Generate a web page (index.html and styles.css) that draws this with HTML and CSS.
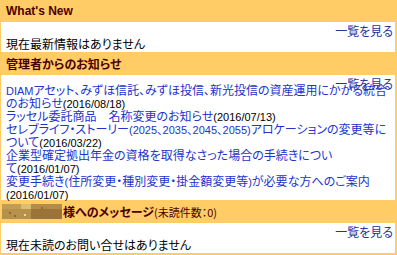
FILE: index.html
```html
<!DOCTYPE html>
<html lang="ja">
<head>
<meta charset="utf-8">
<link rel="stylesheet" href="styles.css">
</head>
<body>
<div class="panel">
  <div class="head head-en">What's New</div>
  <div class="body">
    <div class="more"><a href="#">一覧を見る</a></div>
    <p class="empty">現在最新情報はありません</p>
  </div>

  <div class="head">管理者からのお知らせ</div>
  <div class="body body-news">
    <div class="more"><a href="#">一覧を見る</a></div>
    <ul class="news">
      <li><a href="#"><span class="num">DIAM</span>アセット、みずほ信託、みずほ投信、新光投信の資産運用にかかる統合のお知らせ</a><span class="num date">(2016/08/18)</span></li>
      <li><a href="#">ラッセル委託商品　名称変更のお知らせ</a><span class="num date">(2016/07/13)</span></li>
      <li><a href="#">セレブライフ・ストーリー<span class="num">(2025、2035、2045、2055)</span>アロケーションの変更等について</a><span class="num date">(2016/03/22)</span></li>
      <li><a href="#">企業型確定拠出年金の資格を取得なさった場合の手続きについ<span class="nowrap">て<span class="num date">(2016/01/07)</span></span></a></li>
      <li><a href="#">変更手続き<span class="num">(</span>住所変更・種別変更・掛金額変更等<span class="num">)</span>が必要な方へのご案内</a><span class="num date">(2016/01/07)</span></li>
    </ul>
  </div>

  <div class="head head-msg"><span class="mosaic"></span>様へのメッセージ<span class="count">(未読件数：0)</span></div>
  <div class="body">
    <div class="more"><a href="#">一覧を見る</a></div>
    <p class="empty">現在未読のお問い合せはありません</p>
  </div>
</div>
</body>
</html>
```

FILE: styles.css
```css
html, body {
  margin: 0;
  padding: 0;
  background: #ffffff;
}

body {
  font-family: "Noto Sans CJK JP", "Noto Sans", sans-serif;
  font-size: 12px;
  color: #000000;
  font-feature-settings: "palt";
}

.panel {
  width: 394px;
  border-left: 1px solid #ffcc66;
  border-right: 2px solid #ffcc66;
  border-bottom: 2px solid #ffcc66;
}

.head {
  height: 23px;
  background: #ffcc66;
  padding-left: 5px;
  display: flex;
  align-items: center;
  font-weight: bold;
  font-size: 12px;
  color: #4a0000;
  line-height: 14px;
}

.head-en {
  height: 22px;
  font-family: "Liberation Sans", Arial, sans-serif;
  font-size: 12px;
}

.body {
  height: 30px;
  padding: 2px 2px 0 5px;
  box-sizing: border-box;
}

.body-news {
  height: 125px;
}

.more {
  text-align: right;
  line-height: 13px;
  font-size: 12px;
}

.more a {
  color: #223399;
  text-decoration: none;
}

.empty {
  margin: 0;
  line-height: 14px;
  font-size: 12px;
}

.news {
  list-style: none;
  margin: -7px 0 0 0;
  padding: 0;
  line-height: 13px;
}

.news a {
  color: #2233cc;
  text-decoration: none;
}

.num {
  font-family: "Liberation Sans", "Noto Sans CJK JP", sans-serif;
  font-size: 11px;
  line-height: 0;
}

.date {
  color: #000000;
}

.nowrap {
  white-space: nowrap;
}

.head-msg {
  padding-left: 1px;
}

.mosaic {
  width: 60px;
  height: 15px;
  margin-right: 1px;
  background:
    radial-gradient(circle at 8px 9px, #8a6a30 0 1px, transparent 1.5px),
    radial-gradient(circle at 13px 12px, #8a6a30 0 1px, transparent 1.5px),
    radial-gradient(circle at 23px 11px, #f0d890 0 1px, transparent 1.5px),
    radial-gradient(circle at 40px 4px, #8a6a30 0 1px, transparent 1.5px),
    linear-gradient(180deg, transparent 0 5px, rgba(0, 0, 0, 0.06) 5px),
    linear-gradient(90deg, #c29c54 0 19px, #dcc072 19px 29px, #b38c4a 29px 60px) top / 60px 5px no-repeat,
    linear-gradient(90deg, #c09a50 0 29px, #a57a3c 29px 60px);
}

.count {
  font-weight: normal;
  font-size: 11px;
}
```
